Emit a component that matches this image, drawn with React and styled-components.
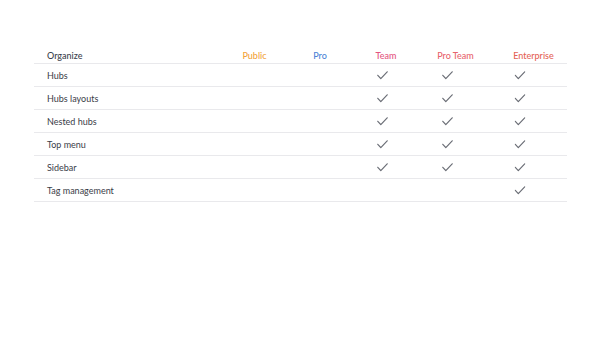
import React from "react";
import styled, { createGlobalStyle } from "styled-components";

const Global = createGlobalStyle`
  html, body { margin: 0; padding: 0; background: #fff; }
  body { font-family: Lato, "Open Sans", sans-serif; }
`;

const Page = styled.div`
  width: 600px;
  height: 337px;
  padding: 48px 0 0 34px;
  box-sizing: border-box;
`;

const Table = styled.div`
  width: 533px;
  display: grid;
  grid-template-columns: 188px 65px 66px 66px 73px 75px;
`;

const Row = styled.div`
  display: contents;
`;

const Cell = styled.div`
  height: ${(p) => (p.$head ? 15 : 22)}px;
  border-bottom: 1px solid #e9e9ec;
  display: flex;
  align-items: center;
  justify-content: center;
  box-sizing: content-box;
`;

const Label = styled(Cell)`
  justify-content: flex-start;
  padding-left: 13px;
  font-size: 9px;
  color: ${(p) => (p.$head ? "#3b3f4d" : "#3a3d48")};
  font-weight: ${(p) => (p.$head ? 500 : 400)};
`;

const HeadCell = styled(Cell)`
  font-size: 9px;
  font-weight: 500;
  color: ${(p) => p.$color};
  & > span {
    transform: translateX(${(p) => p.$shift || 0}px);
  }
`;

const CheckCell = styled(Cell)`
  & > svg {
    transform: translateX(${(p) => p.$shift || 0}px);
  }
`;

const Check = () => (
  <svg width="11" height="9" viewBox="0 0 11 9">
    <polyline
      points="0.8,4.3 3.8,7.6 10.2,0.8"
      fill="none"
      stroke="#6b6e76"
      strokeWidth="1.2"
      strokeLinecap="round"
      strokeLinejoin="round"
    />
  </svg>
);

const plans = [
  { name: "Public", color: "#f2a33a", head: 0, check: 0 },
  { name: "Pro", color: "#4c84d6", head: 0, check: 0 },
  { name: "Team", color: "#e4557f", head: 0, check: -4 },
  { name: "Pro Team", color: "#e7646c", head: 0, check: -8 },
  { name: "Enterprise", color: "#e46356", head: 4, check: -9.5 },
];

const features = [
  { name: "Hubs", has: [false, false, true, true, true] },
  { name: "Hubs layouts", has: [false, false, true, true, true] },
  { name: "Nested hubs", has: [false, false, true, true, true] },
  { name: "Top menu", has: [false, false, true, true, true] },
  { name: "Sidebar", has: [false, false, true, true, true] },
  { name: "Tag management", has: [false, false, false, false, true] },
];

export default function App() {
  return (
    <>
      <Global />
      <Page>
        <Table>
          <Row>
            <Label $head>Organize</Label>
            {plans.map((p) => (
              <HeadCell $head key={p.name} $color={p.color} $shift={p.head}>
                <span>{p.name}</span>
              </HeadCell>
            ))}
          </Row>
          {features.map((f) => (
            <Row key={f.name}>
              <Label>{f.name}</Label>
              {f.has.map((h, i) => (
                <CheckCell key={i} $shift={plans[i].check}>
                  {h && <Check />}
                </CheckCell>
              ))}
            </Row>
          ))}
        </Table>
      </Page>
    </>
  );
}
